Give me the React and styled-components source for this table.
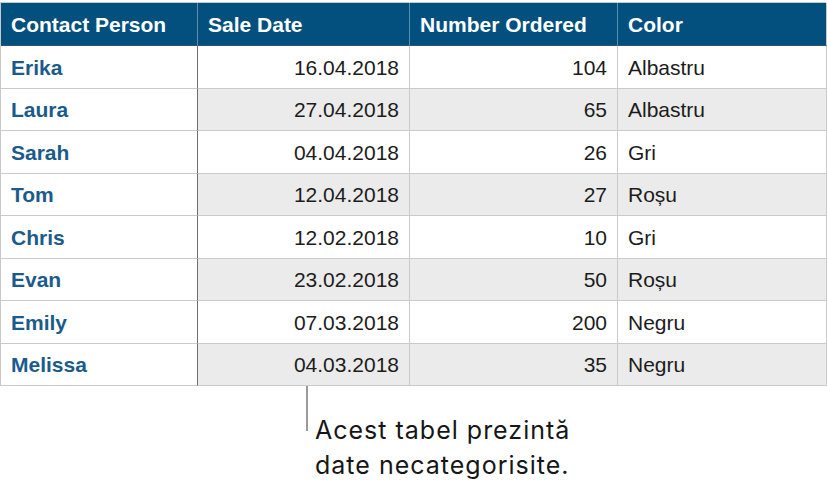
import React from "react";
import styled, { createGlobalStyle } from "styled-components";

const Global = createGlobalStyle`
  html, body { margin: 0; padding: 0; background: #ffffff; }
  body { font-family: "Liberation Sans", Arial, sans-serif; }
`;

const Page = styled.div`
  width: 827px;
  height: 492px;
  padding-top: 2px;
  box-sizing: border-box;
  background: #fff;
`;

const Table = styled.div`
  display: grid;
  grid-template-columns: 197px 212px 208px 209px;
  width: 826px;
  border-top: 1px solid #c9c9c9;
  border-left: 1px solid #c9c9c9;
  box-sizing: border-box;
`;

const HeadCell = styled.div`
  height: 43px;
  background: #03507f;
  color: #ffffff;
  font-weight: 700;
  font-size: 21px;
  display: flex;
  align-items: center;
  padding: 1px 0 0 10px;
  border-right: 1px solid ${(p) => (p.$last ? "#c9c9c9" : "#5f8db0")};
  border-bottom: 1px solid #2e5470;
  box-sizing: border-box;
  white-space: nowrap;
`;

const Cell = styled.div`
  height: 42.5px;
  display: flex;
  align-items: center;
  justify-content: ${(p) => (p.$right ? "flex-end" : "flex-start")};
  padding: 2px ${(p) => (p.$right ? "10px" : "0")} 0 ${(p) => (p.$right ? "0" : "10px")};
  background: ${(p) => (p.$alt ? "#ebebeb" : "#ffffff")};
  border-bottom: 1px solid #cacaca;
  border-right: ${(p) => (p.$name ? "1.5px solid #6f6f6f" : "1px solid #cacaca")};
  color: ${(p) => (p.$name ? "#1b5b8c" : "#1c1c1c")};
  font-weight: ${(p) => (p.$name ? 700 : 400)};
  font-size: 21px;
  box-sizing: border-box;
  white-space: nowrap;
`;

const Callout = styled.div`
  display: flex;
  align-items: flex-start;
  padding-left: 306px;
`;

const Leader = styled.div`
  width: 2px;
  height: 45px;
  background: #9a9a9a;
  flex: none;
`;

const Note = styled.div`
  margin-top: 27px;
  margin-left: 7px;
  font-family: Inter, "Liberation Sans", sans-serif;
  font-size: 25px;
  letter-spacing: 1px;
  line-height: 35px;
  color: #161616;
`;

const rows = [
  ["Erika", "16.04.2018", "104", "Albastru"],
  ["Laura", "27.04.2018", "65", "Albastru"],
  ["Sarah", "04.04.2018", "26", "Gri"],
  ["Tom", "12.04.2018", "27", "Roșu"],
  ["Chris", "12.02.2018", "10", "Gri"],
  ["Evan", "23.02.2018", "50", "Roșu"],
  ["Emily", "07.03.2018", "200", "Negru"],
  ["Melissa", "04.03.2018", "35", "Negru"],
];

export default function App() {
  return (
    <Page>
      <Global />
      <Table>
        <HeadCell>Contact Person</HeadCell>
        <HeadCell>Sale Date</HeadCell>
        <HeadCell>Number Ordered</HeadCell>
        <HeadCell $last>Color</HeadCell>
        {rows.map((r, i) => {
          const alt = i % 2 === 1;
          return (
            <React.Fragment key={r[0]}>
              <Cell $name>{r[0]}</Cell>
              <Cell $right $alt={alt}>{r[1]}</Cell>
              <Cell $right $alt={alt}>{r[2]}</Cell>
              <Cell $alt={alt}>{r[3]}</Cell>
            </React.Fragment>
          );
        })}
      </Table>
      <Callout>
        <Leader />
        <Note>
          Acest tabel prezintă
          <br />
          date necategorisite.
        </Note>
      </Callout>
    </Page>
  );
}
